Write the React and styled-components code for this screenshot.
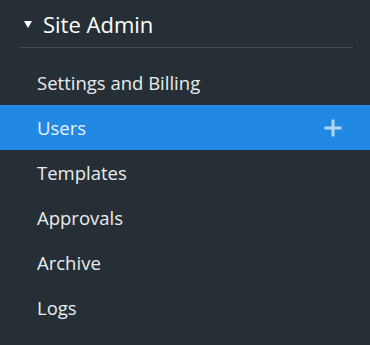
import React from "react";
import styled, { createGlobalStyle } from "styled-components";

const Global = createGlobalStyle`
	html, body {
		margin: 0;
		padding: 0;
		background: #272f36;
	}
`;

const Panel = styled.nav`
	width: 370px;
	height: 345px;
	background: #272f36;
	font-family: "Open Sans", "Noto Sans", sans-serif;
	color: #eef1f3;
	overflow: hidden;
`;

const Header = styled.div`
	display: flex;
	align-items: center;
	gap: 11px;
	height: 48px;
	margin: 0 17px 0 19px;
	padding-left: 5px;
	border-bottom: 1px solid #434c54;
	box-sizing: border-box;
	font-size: 22px;
	color: #ffffff;
`;

const Caret = styled.span`
	width: 0;
	height: 0;
	border-left: 4px solid transparent;
	border-right: 4px solid transparent;
	border-top: 7px solid #ffffff;
	margin-top: 1px;
`;

const List = styled.ul`
	list-style: none;
	margin: 0;
	padding: 12px 0 0;
`;

const Item = styled.li`
	display: flex;
	align-items: center;
	justify-content: space-between;
	height: 45px;
	padding: 0 28px 0 37px;
	font-size: 18.5px;
	color: ${p => (p.$active ? "#e6f3fd" : "#e9edf0")};
	background: ${p => (p.$active ? "#2189e3" : "transparent")};
`;

const Plus = styled.svg`
	width: 18px;
	height: 18px;
`;

const items = ["Settings and Billing", "Users", "Templates", "Approvals", "Archive", "Logs"];

export default function App() {
	return (
		<Panel>
			<Global />
			<Header>
				<Caret />
				Site Admin
			</Header>
			<List>
				{items.map(name => (
					<Item key={name} $active={name === "Users"}>
						{name}
						{name === "Users" ? (
							<Plus viewBox="0 0 18 18">
								<path d="M9 0.5v17M0.5 9h17" stroke="#b1d8f8" strokeWidth="3" />
							</Plus>
						) : null}
					</Item>
				))}
			</List>
		</Panel>
	);
}
